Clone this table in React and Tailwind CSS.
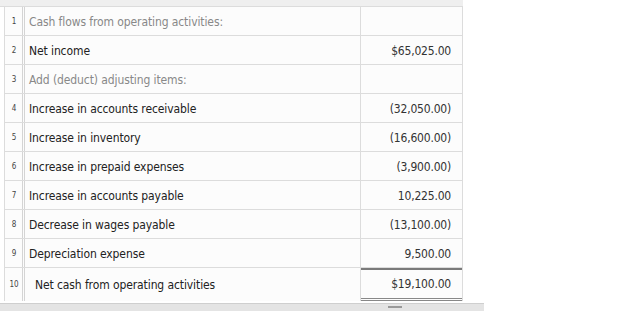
const rows = [
  { n: 1, label: "Cash flows from operating activities:", value: "", muted: true },
  { n: 2, label: "Net income", value: "$65,025.00" },
  { n: 3, label: "Add (deduct) adjusting items:", value: "", muted: true },
  { n: 4, label: "Increase in accounts receivable", value: "(32,050.00)" },
  { n: 5, label: "Increase in inventory", value: "(16,600.00)" },
  { n: 6, label: "Increase in prepaid expenses", value: "(3,900.00)" },
  { n: 7, label: "Increase in accounts payable", value: "10,225.00" },
  { n: 8, label: "Decrease in wages payable", value: "(13,100.00)" },
  { n: 9, label: "Depreciation expense", value: "9,500.00" },
];

function Row({ n, label, value, muted }) {
  return (
    <div className="flex h-[29px] border-b border-[#dcdcdc]">
      <div className="flex w-[20px] items-center justify-center border-r-[3px] border-double border-[#d4d4d4] pt-[2px] pl-[1px] text-[8px] text-[#444]">
        {n}
      </div>
      <div
        className={`flex w-[336px] items-center border-r border-[#dcdcdc] pt-[2px] pl-[4px] text-[12px] tracking-[-0.1px] ${
          muted ? "text-[#888]" : "text-[#222]"
        }`}
      >
        {label}
      </div>
      <div className="flex flex-1 items-center justify-end pt-[2px] pr-[11px] text-[12px] tracking-[-0.2px] text-[#333]">
        {value}
      </div>
    </div>
  );
}

export default function App() {
  return (
    <div
      className="flex h-[311px] w-[625px] flex-col bg-white"
      style={{ fontFamily: '"Liberation Sans Narrow", "DejaVu Sans Condensed", "Roboto Condensed", Roboto, sans-serif' }}
    >
      <div className="h-[7px] w-[463px] border-b border-[#dcdcdc] bg-[#efefef]" />
      <div className="ml-[4px] w-[459px] border-x border-[#dcdcdc] bg-[#fcfcfc]">
        {rows.map((r) => (
          <Row key={r.n} {...r} />
        ))}
        <div className="flex h-[33px]">
          <div className="flex w-[20px] items-center justify-center border-r-[3px] border-double border-[#d4d4d4] pt-[1px] pl-[1px] text-[8px] text-[#444]">
            10
          </div>
          <div className="flex w-[336px] items-center border-r border-[#dcdcdc] pt-[1px] pl-[10px] text-[12px] tracking-[-0.1px] text-[#222]">
            Net cash from operating activities
          </div>
          <div className="flex flex-1 items-center justify-end border-b-[3px] border-double border-[#888] pt-[3px] pr-[11px] text-[12px] tracking-[-0.2px] text-[#333] shadow-[inset_0_2px_0_#7a7a7a]">
            $19,100.00
          </div>
        </div>
      </div>
      <div className="mt-[2px] flex h-[9px] w-[484px] border-t border-[#cfcfcf] bg-[#e4e4e4]">
        <div className="ml-[388px] mt-[2px] h-[2px] w-[14px] bg-[#999]" />
      </div>
    </div>
  );
}
